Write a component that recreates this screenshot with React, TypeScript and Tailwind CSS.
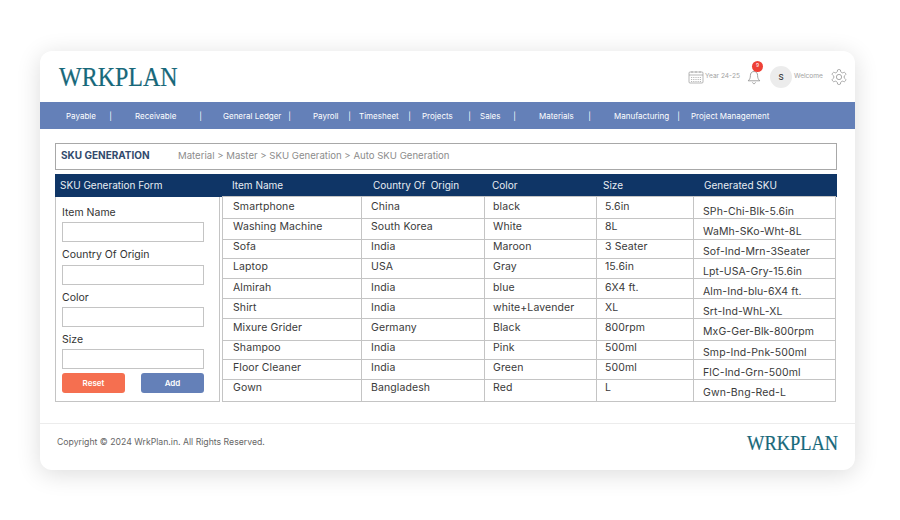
const fontBody = "font-['Inter',sans-serif]";

const navItems = [
  { label: "Payable", cell: "w-[72px] pl-[26px]", sep: true },
  { label: "Receivable", cell: "w-[90px] pl-[23px]", sep: true },
  { label: "General Ledger", cell: "w-[89px] pl-[21px]", sep: true },
  { label: "Payroll", cell: "w-[60px] pl-[22px]", sep: true },
  { label: "Timesheet", cell: "w-[60px] pl-[8px]", sep: true },
  { label: "Projects", cell: "w-[60px] pl-[11px]", sep: true },
  { label: "Sales", cell: "w-[45px] pl-[9px]", sep: true },
  { label: "Materials", cell: "w-[75px] pl-[23px]", sep: true },
  { label: "Manufacturing", cell: "w-[89px] pl-[23px]", sep: true },
  { label: "Project Management", cell: "pl-[11px]", sep: false },
];

const rows = [
  { h: "h-[22px]", pad: "pt-[5px]", skuPad: "pt-[10px]", cells: ["Smartphone", "China", "black", "5.6in", "SPh-Chi-Blk-5.6in"] },
  { h: "h-[21px]", pad: "pt-[3px]", skuPad: "pt-[8px]", cells: ["Washing Machine", "South Korea", "White", "8L", "WaMh-SKo-Wht-8L"] },
  { h: "h-[19px]", pad: "pt-[2px]", skuPad: "pt-[7px]", cells: ["Sofa", "India", "Maroon", "3 Seater", "Sof-Ind-Mrn-3Seater"] },
  { h: "h-[20px]", pad: "pt-[3px]", skuPad: "pt-[8px]", cells: ["Laptop", "USA", "Gray", "15.6in", "Lpt-USA-Gry-15.6in"] },
  { h: "h-[20px]", pad: "pt-[4px]", skuPad: "pt-[8px]", cells: ["Almirah", "India", "blue", "6X4 ft.", "Alm-Ind-blu-6X4 ft."] },
  { h: "h-[20px]", pad: "pt-[4px]", skuPad: "pt-[8px]", cells: ["Shirt", "India", "white+Lavender", "XL", "Srt-Ind-WhL-XL"] },
  { h: "h-[22px]", pad: "pt-[4px]", skuPad: "pt-[8px]", cells: ["Mixure Grider", "Germany", "Black", "800rpm", "MxG-Ger-Blk-800rpm"] },
  { h: "h-[19px]", pad: "pt-[2px]", skuPad: "pt-[7px]", cells: ["Shampoo", "India", "Pink", "500ml", "Smp-Ind-Pnk-500ml"] },
  { h: "h-[20px]", pad: "pt-[3px]", skuPad: "pt-[8px]", cells: ["Floor Cleaner", "India", "Green", "500ml", "FlC-Ind-Grn-500ml"] },
  { h: "h-[22px]", pad: "pt-[3px]", skuPad: "pt-[8px]", cells: ["Gown", "Bangladesh", "Red", "L", "Gwn-Bng-Red-L"] },
];

const colPad = ["pl-[10px]", "pl-[9px]", "pl-[8px]", "pl-[8px]", "pl-[9px]"];

const fields = [
  { label: "Item Name", mb: "mb-[6px]", gap: "mb-[2px]" },
  { label: "Country Of Origin", mb: "mb-[6px]", gap: "mb-[3px]" },
  { label: "Color", mb: "mb-[6px]", gap: "mb-[2px]" },
  { label: "Size", mb: "mb-[6px]", gap: "mb-[2px]" },
];

const Logo = ({ size }: { size: string }) => (
  <span className={`inline-block font-['Liberation_Serif',serif] text-[#17687a] leading-none scale-y-[1.1] [-webkit-text-stroke:0.2px_#17687a] ${size}`}>WRKPLAN</span>
);

export default function App() {
  return (
    <div className={`w-[900px] h-[520px] bg-white pt-[51px] pl-[40px] overflow-hidden ${fontBody}`}>
      <div className="w-[815px] h-[419px] bg-white rounded-[12px] shadow-[0_4px_24px_rgba(0,0,0,0.14)] overflow-hidden flex flex-col">
        {/* header */}
        <div className="h-[51px] flex items-center justify-between pl-[19px] pr-[7px] shrink-0">
          <Logo size="text-[24px]" />
          <div className="flex items-center text-[#a3a3a3] text-[6.6px]">
            <svg width="16" height="14" viewBox="0 0 16 14" fill="none" stroke="#9a9a9a" strokeWidth="0.7">
              <rect x="1" y="2" width="14" height="11" rx="1" />
              <path d="M1 5h14M4 1v2M8 1v2M12 1v2" />
              <path d="M3 7.5h10M3 9.5h10M3 11.5h10" strokeDasharray="1.2 1" />
            </svg>
            <span className="ml-[1px] w-[34px] whitespace-nowrap">Year 24-25</span>
            <div className="relative ml-[8px] w-[14px] h-[16px]">
              <svg width="14" height="15" viewBox="0 0 14 15" fill="none" stroke="#8a8a8a" strokeWidth="0.8" className="absolute top-[1px] left-0">
                <path d="M7 1.5c-2.4 0-3.6 1.8-3.6 4 0 2.6-.8 4-2.2 5.3h11.6c-1.4-1.3-2.2-2.7-2.2-5.3 0-2.2-1.2-4-3.6-4Z" />
                <path d="M5.5 12.3c.3 1 .9 1.4 1.5 1.4s1.2-.4 1.5-1.4" />
              </svg>
              <span className="absolute -top-[8px] left-[5px] w-[11px] h-[11px] rounded-full bg-[#ee4036] text-white text-[5px] flex items-center justify-center">9</span>
            </div>
            <span className="ml-[9px] w-[22px] h-[22px] rounded-full bg-[#ececec] text-[#333] text-[8px] font-medium flex items-center justify-center">S</span>
            <span className="ml-[2px] w-[30px] whitespace-nowrap">Welcome</span>
            <svg width="18" height="18" viewBox="0 0 24 24" fill="none" stroke="#8f8f8f" strokeWidth="1" className="ml-[6px]">
              <path d="M12.22 2h-.44a2 2 0 0 0-2 2v.18a2 2 0 0 1-1 1.73l-.43.25a2 2 0 0 1-2 0l-.15-.08a2 2 0 0 0-2.73.73l-.22.38a2 2 0 0 0 .73 2.73l.15.1a2 2 0 0 1 1 1.72v.51a2 2 0 0 1-1 1.74l-.15.09a2 2 0 0 0-.73 2.73l.22.38a2 2 0 0 0 2.73.73l.15-.08a2 2 0 0 1 2 0l.43.25a2 2 0 0 1 1 1.73V20a2 2 0 0 0 2 2h.44a2 2 0 0 0 2-2v-.18a2 2 0 0 1 1-1.73l.43-.25a2 2 0 0 1 2 0l.15.08a2 2 0 0 0 2.73-.73l.22-.39a2 2 0 0 0-.73-2.73l-.15-.08a2 2 0 0 1-1-1.74v-.5a2 2 0 0 1 1-1.74l.15-.09a2 2 0 0 0 .73-2.73l-.22-.38a2 2 0 0 0-2.73-.73l-.15.08a2 2 0 0 1-2 0l-.43-.25a2 2 0 0 1-1-1.73V4a2 2 0 0 0-2-2Z" />
              <circle cx="12" cy="12" r="3.5" />
            </svg>
          </div>
        </div>

        {/* nav */}
        <div className="h-[27px] bg-[#6480b8] flex items-center text-white text-[8px] shrink-0">
          {navItems.map((n) => (
            <div key={n.label} className={`${n.cell} flex justify-between whitespace-nowrap`}>
              <span>{n.label}</span>
              {n.sep && <span>|</span>}
            </div>
          ))}
        </div>

        {/* breadcrumb */}
        <div className="mt-[14px] ml-[15px] w-[782px] h-[27px] border border-[#a8a8a8] flex items-center pl-[5px] pb-[2px] shrink-0">
          <span className="w-[117px] text-[#324a6d] text-[10px] font-bold">SKU GENERATION</span>
          <span className="text-[#8c8c8c] text-[9.6px] pt-[2px]">Material &gt; Master &gt; SKU Generation &gt; Auto SKU Generation</span>
        </div>

        {/* title bar */}
        <div className="mt-[4px] ml-[15px] w-[782px] h-[23px] bg-[#0f3566] text-[#e8edf3] text-[10px] flex items-center shrink-0 whitespace-pre">
          <span className="w-[177px] pl-[5px]">SKU Generation Form</span>
          <span className="w-[141px]">Item Name</span>
          <span className="w-[119px]">Country Of  Origin</span>
          <span className="w-[111px]">Color</span>
          <span className="w-[101px]">Size</span>
          <span>Generated SKU</span>
        </div>

        <div className="ml-[15px] flex items-start shrink-0">
          {/* form */}
          <div className="w-[165px] h-[205px] border border-t-0 border-[#c4c4c4] pl-[6px] pr-[15px] pt-[9px]">
            {fields.map((f) => (
              <div key={f.label} className={f.mb}>
                <label className={`block text-[#333] text-[10.5px] leading-[14px] whitespace-nowrap ${f.gap}`}>{f.label}</label>
                <input className="block w-[142px] h-[20px] border border-[#c4c4c4] bg-white" />
              </div>
            ))}
            <div className="flex justify-between w-[142px] -mt-[2px]">
              <button className="w-[63px] h-[20px] rounded-[3px] bg-[#f56f50] text-white text-[8px] font-semibold">Reset</button>
              <button className="w-[63px] h-[20px] rounded-[3px] bg-[#6480b8] text-white text-[8px] font-semibold">Add</button>
            </div>
          </div>

          {/* table */}
          <table className="ml-[2px] -mt-[1px] w-[613px] table-fixed border-collapse text-[#3a3a3a] text-[10.5px] tracking-[0.1px]">
            <colgroup>
              <col className="w-[139px]" />
              <col className="w-[123px]" />
              <col className="w-[112px]" />
              <col className="w-[97px]" />
              <col className="w-[142px]" />
            </colgroup>
            <tbody>
              {rows.map((r) => (
                <tr key={r.cells[0]} className={r.h}>
                  {r.cells.map((c, i) => (
                    <td
                      key={i}
                      className={`border border-[#c4c4c4] align-top whitespace-nowrap overflow-hidden p-0 leading-[10px] ${colPad[i]} ${i === 4 ? r.skuPad : r.pad}`}
                    >
                      {c}
                    </td>
                  ))}
                </tr>
              ))}
            </tbody>
          </table>
        </div>

        {/* footer */}
        <div className="mt-[21px] border-t border-[#ececec] flex-1 flex items-center justify-between pl-[17px] pr-[17px] pb-[8px]">
          <span className="text-[#666] text-[8.7px]">Copyright © 2024 WrkPlan.in. All Rights Reserved.</span>
          <Logo size="text-[18.4px]" />
        </div>
      </div>
    </div>
  );
}
